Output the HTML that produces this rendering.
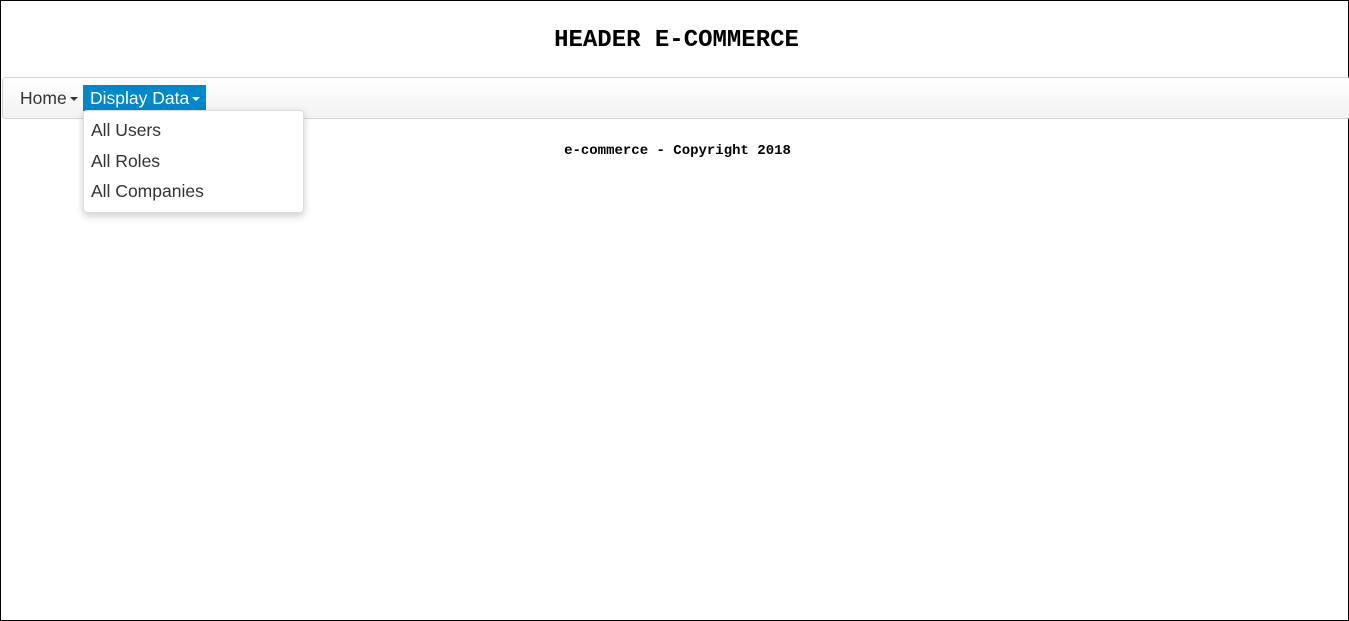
<!DOCTYPE html>
<html><head><style>
html,body{margin:0;padding:0;}
body{width:1349px;height:621px;box-sizing:border-box;border:1px solid #000;position:relative;overflow:hidden;background:#fff;font-family:"Liberation Sans",sans-serif;}
.h{position:absolute;top:26px;left:0;width:100%;text-align:center;font:bold 24px "Liberation Mono",monospace;color:#000;padding-left:4px;box-sizing:border-box;}
.nav{position:absolute;left:1px;right:-3px;top:76px;height:40px;border:1px solid #d4d4d4;border-radius:4px;background:linear-gradient(#fff,#f2f2f2);}
.it{position:absolute;top:84px;height:26px;line-height:26px;font-size:17.5px;color:#333;}
.car{display:inline-block;width:0;height:0;border-left:4px solid transparent;border-right:4px solid transparent;border-top:4px solid currentColor;vertical-align:middle;margin-left:3px;}
.dd{position:absolute;left:82px;top:109px;width:219px;height:101px;background:#fff;border:1px solid #ddd;border-radius:4px;box-shadow:0 3px 8px rgba(0,0,0,.2);}
.dd div{position:absolute;left:7px;font-size:17.5px;color:#333;}
.f{position:absolute;top:142px;left:0;width:100%;text-align:center;font:bold 14px "Liberation Mono",monospace;color:#000;padding-left:6px;box-sizing:border-box;}
</style></head><body>
<div class="h">HEADER E-COMMERCE</div>
<div class="nav"></div>
<div class="it" style="left:19px">Home<span class="car"></span></div>
<div class="it" style="left:82px;width:116px;padding-left:7px;background:#0088cc;color:#fff;">Display Data<span class="car"></span></div>
<div class="f">e-commerce - Copyright 2018</div>
<div class="dd">
<div style="top:9px">All Users</div>
<div style="top:40px">All Roles</div>
<div style="top:70px">All Companies</div>
</div>
</body></html>
